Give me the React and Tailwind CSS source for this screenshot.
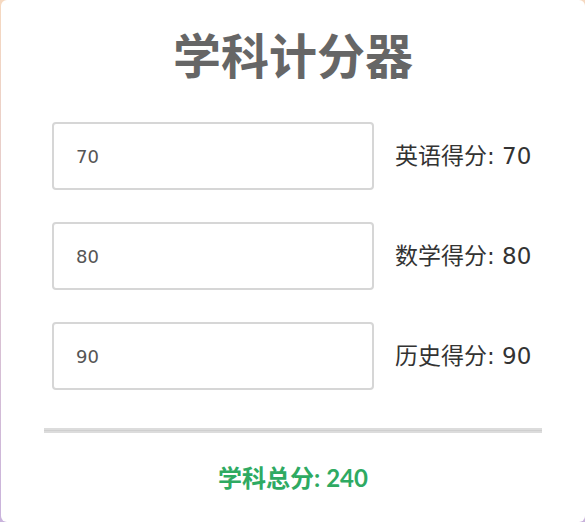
import { useState } from "react";

const subjects = [
  { key: "english", label: "英语得分" },
  { key: "math", label: "数学得分" },
  { key: "history", label: "历史得分" },
];

export default function App() {
  const [scores, setScores] = useState({ english: 70, math: 80, history: 90 });

  const total = Object.values(scores).reduce((a, b) => a + (Number(b) || 0), 0);

  return (
    <div className="min-h-[522px] w-[585px] bg-gradient-to-b from-[#f6d9c0] to-[#c9b3dc]">
      <div
        className="ml-px h-[522px] rounded-md bg-white pt-[24px]"
        style={{ fontFamily: '"DejaVu Sans", "Noto Sans CJK SC", sans-serif' }}
      >
        <h1
          className="text-center text-[48px] font-bold leading-[64px] text-[#666666]"
          style={{ fontFamily: '"Noto Sans", "Noto Sans CJK SC", sans-serif' }}
        >
          学科计分器
        </h1>

        <div className="mt-[34px] flex flex-col gap-[32px] pl-[51px]">
          {subjects.map((s) => (
            <div key={s.key} className="flex items-center">
              <input
                type="number"
                value={scores[s.key]}
                onChange={(e) => setScores({ ...scores, [s.key]: e.target.value })}
                className="h-[68px] w-[322px] rounded-[4px] border-2 border-[#d6d6d6] bg-white pl-[22px] text-[18px] text-[#555] outline-none"
              />
              <span className="ml-[21px] text-[23px] text-[#333]">
                {s.label}: {scores[s.key]}
              </span>
            </div>
          ))}
        </div>

        <div className="mx-[43px] mt-[38px] h-[5px] border-y-2 border-[#dcdcdc] bg-[#cfcfcf]" />

        <p
          className="mt-[27px] text-center text-[24px] font-bold text-[#2eaa62]"
          style={{ fontFamily: 'Lato, "Noto Sans CJK SC", sans-serif' }}
        >
          学科总分: {total}
        </p>
      </div>
    </div>
  );
}
